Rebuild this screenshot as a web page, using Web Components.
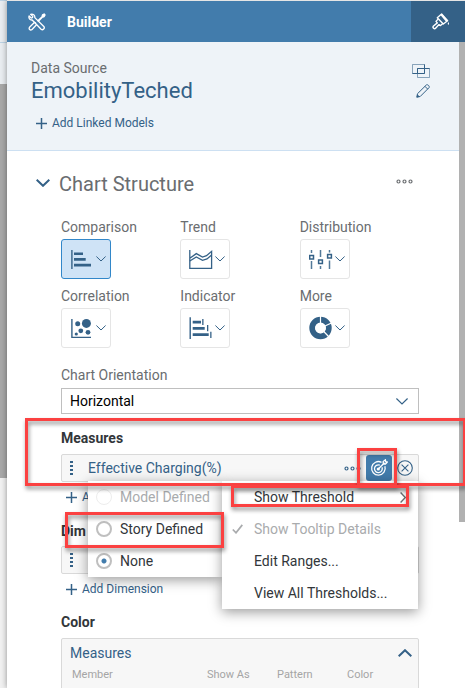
<!DOCTYPE html>
<html lang="en">
<head>
<meta charset="utf-8">
<title>Builder</title>
<style>
html, body { margin: 0; height: 100%; overflow: hidden; }
body { font-family: Roboto, "Liberation Sans", sans-serif; font-size: 14px; color: #333; background: #fff; }
</style>
</head>
<body>
<builder-app></builder-app>
<script>
const ICONS = {
  tools: ['0 0 18 18', '<g fill="none" stroke="currentColor" stroke-width="1.3" stroke-linejoin="round" stroke-linecap="round"><path d="M2.6 1.3 4.8 3.4 4.5 4.7 3.2 5 1.1 2.9C.4 5 1.7 7.2 4.2 7l8.900 9.200c1.700 1.500 4.200-.900 2.700-2.700L6.800 4.600C7.200 2 4.900.5 2.600 1.300Z"/><path d="M9.900 7.700 14.100 3.600 14.500 1.900 16.200 1 17 1.900 16.100 3.600 14.500 4 10.600 8.100M7.600 10 6.600 9.300 1.500 14.300C.4 16 2.200 17.700 3.800 16.700L8.500 11.700"/></g><path d="M13.700 2.800 15.900.7 17.300 2 15.200 4.400Z" fill="currentColor"/>'],
  brush: ['0 0 18 17', '<g fill="none" stroke="currentColor" stroke-width="1.400" stroke-linejoin="round" stroke-linecap="round"><path d="M5.300 4.700 9.600 1 15.600 7.800 11.300 11Z"/><path d="M5.600 6.600 4 8.400 5.300 9.900 1.500 13C.1 14.600 2.300 16.600 3.800 15L7 11.600 8.500 12.600 10.300 11"/></g><path d="M8.600 2.300 10 .9 15.900 7.500 14.300 8.900Z" fill="currentColor"/><path d="M16.400 9C14.200 12.600 18.600 12.600 16.400 9Z" fill="currentColor"/>'],
  linked: ['0 0 18 14', '<g fill="none" stroke="#346187"><path d="M.5.5H12.500V9.500H.5ZM5.500 4.500H17.500V13.500H5.500Z" opacity=".55"/><path d="M5.500 9.500V4.500H12.500V9.500ZM12.500.5V4.500M.5 9.500H5.500M12.500 4.500H17.500"/></g>'],
  pencil: ['0 0 14 14', '<g fill="none" stroke="currentColor" stroke-linejoin="round"><path d="M.8 13.200 1.500 9.700 10.300 1C11.500-.1 14.100 2.300 13 3.700L4.200 12.500Z"/><path d="M8.900 2.300 11.700 5.100"/></g><path d="M.6 13.400 1.300 10.300 3.800 12.700Z" fill="currentColor"/>'],
  plus: ['0 0 11 11', '<path d="M5.500 0V11M0 5.500H11" fill="none" stroke="currentColor" stroke-width="1.500"/>'],
  down: ['0 0 14 8', '<path d="M.7.8 7 6.800 13.300.8" fill="none" stroke="currentColor" stroke-width="2"/>'],
  up: ['0 0 14 8', '<path d="M.7 7.200 7 1.200 13.300 7.200" fill="none" stroke="currentColor" stroke-width="2"/>'],
  thin: ['0 0 10 6', '<path d="M.4.500 5 5 9.600.5" fill="none" stroke="currentColor"/>'],
  thinwide: ['0 0 12 7', '<path d="M.4.500 6 6 11.600.5" fill="none" stroke="currentColor" stroke-width="1.200"/>'],
  right: ['0 0 6 11', '<path d="M.6.6 5.300 5.500.6 10.400" fill="none" stroke="#6a6d70" stroke-width="1.400"/>'],
  more: ['0 0 17 5', '<g fill="none" stroke="currentColor" stroke-width="1.200"><circle cx="2.500" cy="2.500" r="1.500"/><circle cx="8.500" cy="2.500" r="1.500"/><circle cx="14.500" cy="2.500" r="1.500"/></g>'],
  grip: ['0 0 3 14', '<path d="M0 0h3v2H0ZM0 4h3v2H0ZM0 8h3v2H0ZM0 12h3v2H0Z" fill="currentColor"/>'],
  check: ['0 0 11 10', '<path d="M.8 5.500 4 8.800 10.300.9" fill="none" stroke="currentColor" stroke-width="1.700"/>'],
  close: ['0 0 16 16', '<g fill="none" stroke="currentColor" stroke-width="1.100"><circle cx="8" cy="8" r="7.300"/><path d="M4.600 4.600 11.400 11.400M11.400 4.600 4.600 11.400"/></g>'],
  target: ['0 0 18 18', '<g fill="none" stroke="currentColor" stroke-width="1.300"><path d="M11.500 3.300A6.800 6.800 0 1 0 14.900 7.300M9.800 6.100A3.900 3.900 0 1 0 12 8.300"/><path d="M8.300 10 14.500 3.800M13.200 4.800V2.600L15.400.8 15.700 2.600 17.300 3 15.500 5Z"/></g><circle cx="8.300" cy="10" r="1.600" fill="currentColor"/>'],
  comparison: ['0 0 22 22', '<path d="M1.200 2h1.400v19H1.200ZM4 4.400h9v2.600H4ZM4 10h11.700v2.700H4ZM4 15.700h17v2.700H4Z" fill="currentColor"/>'],
  trend: ['0 0 24 22', '<g fill="none" stroke="currentColor" stroke-width="1.300"><path d="M.8 2V20.400H22.600V3.300L17.500 7.700 13.500 9 7.300 5.600.8 10.300"/><path d="M.8 13 7.300 9 13.500 12.300 18 10.900 22.600 7"/></g>'],
  distribution: ['0 0 24 22', '<g fill="none" stroke="currentColor" stroke-width="1.500"><path d="M2.500 2V5M2.500 13V21M11.500 2V9M11.500 18V21M20.500 2V4.500M20.500 12.500V21" opacity=".85"/><path d="M.7 7.500h3.800v3.500H.7ZM9.600 12h3.800v3.500H9.600ZM18.600 6.500h3.800v3.500h-3.800Z"/></g>'],
  correlation: ['0 0 22 22', '<g fill="currentColor"><path d="M1.200 2h1.400v17.800H21V21H1.200Z"/><circle cx="7.700" cy="6.800" r="2.500"/><circle cx="16.400" cy="6.400" r="4.500"/><circle cx="10.800" cy="13.800" r="2.400"/><circle cx="6.300" cy="17" r="1.600"/><circle cx="18" cy="15.300" r="2.400"/></g>'],
  indicator: ['0 0 24 24', '<g fill="currentColor"><path d="M.5 1.300H1.900V23H.5ZM3.700 4.700h8.300v2.700H3.700ZM3.700 11h12v2.700h-12ZM3.700 17.200h16v2.700h-16ZM13.200 3h1.300v6h-1.300ZM18 9h1.300v6.300H18ZM21.200 15.700h1.300v6.300h-1.300Z"/></g>'],
  donut: ['0 0 24 24', '<circle cx="11.500" cy="12" r="8.300" fill="none" stroke="currentColor" stroke-width="5.800"/><path d="M11.500 12V0M11.500 12 22.500 7M11.500 12 20 21" stroke="#fff" stroke-width="1.200"/><circle cx="11.500" cy="12" r="5.300" fill="#fff"/>']
};
const define = (name, html, after) => {
  const t = document.createElement('template');
  t.innerHTML = html;
  customElements.define(name, class extends HTMLElement {
    constructor() { super(); this.attachShadow({ mode: 'open' }); }
    connectedCallback() {
      if (this.shadowRoot.firstChild) return;
      this.shadowRoot.append(t.content.cloneNode(true));
      if (after) after(this, this.shadowRoot);
    }
  });
};
const BTN = 'button{font:inherit;color:inherit;background:none;border:0;padding:0;margin:0;text-align:left;cursor:pointer}';

define('ui-icon', '<style>:host{display:block;flex:none}svg{display:block;width:100%;height:auto}</style><svg aria-hidden="true"></svg>', (el, r) => {
  const [box, art] = ICONS[el.getAttribute('name')];
  const svg = r.querySelector('svg');
  svg.setAttribute('viewBox', box);
  svg.innerHTML = art;
  el.style.width = box.split(' ')[2] + 'px';
});

define('canvas-edge', `<style>
:host{display:flex;flex-direction:column;background:#f1f1f1}
.bar{height:41px;background:#e9edf1;border-top:1px solid #bcd2e4}
.sheet{height:394px;background:#a8a8a8}
</style><div class="bar"></div><div class="bar"></div><div class="sheet"></div>`);

define('panel-header', `<style>${BTN}
:host{display:flex;height:41px;background:#427cac;color:#fff;font-weight:700}
.title{flex:1;display:flex;align-items:center;gap:21px;padding-left:21px}
button{width:54px;background:#346187;display:grid;place-items:center;padding-left:6px}
</style><div class="title"><ui-icon name="tools"></ui-icon><slot></slot></div><button aria-label="Styling"><ui-icon name="brush"></ui-icon></button>`);

define('add-button', `<style>${BTN}
:host{display:flex;color:#346187;font-size:12px;line-height:16px}
button{display:flex;align-items:center;gap:5px}
</style><button><ui-icon name="plus"></ui-icon><span><slot></slot></span></button>`);

define('data-source', `<style>${BTN}
:host{display:flex;justify-content:space-between;height:92px;padding:16px 29px 0 24px;background:#eef3f8;border-bottom:1px solid #cde0f2;color:#346187}
.label{color:#6a6d70;line-height:20px}
.name{font-size:22px;line-height:26px;font-weight:400;margin:0}
add-button{margin:11px 0 0 5px}
.tools{display:flex;flex-direction:column;gap:6px;padding-top:6px}
.tools button{display:grid;justify-items:end}
</style><div><div class="label">Data Source</div><h1 class="name"><slot></slot></h1><add-button>Add Linked Models</add-button></div>
<div class="tools"><button aria-label="Blend data"><ui-icon name="linked"></ui-icon></button><button aria-label="Edit"><ui-icon name="pencil"></ui-icon></button></div>`);

define('section-title', `<style>${BTN}
:host{display:flex;align-items:center;height:26px;padding:20px 46px 0 29px;color:#6a6d70;font-size:20px}
h2{flex:1;font:inherit;margin:0 0 0 9px}
.toggle{color:#346187;padding-bottom:3px}
.more{padding-bottom:6px}
</style><button class="toggle" aria-label="Collapse"><ui-icon name="down"></ui-icon></button><h2><slot></slot></h2><button class="more" aria-label="More"><ui-icon name="more"></ui-icon></button>`);

define('chart-type', `<style>${BTN}
:host{display:block;color:#6a6d70}
label{display:block;line-height:20px;margin-bottom:2px}
button{box-sizing:border-box;width:50px;height:40px;border:1px solid #e5e5e5;border-radius:3px;display:flex;align-items:center;justify-content:space-between;padding:0 4px 0 8px;color:#346187}
:host([selected]) button{background:#cfe3f6;border-color:#3287c9}
</style><label for="b"><slot></slot></label><button id="b"></button>`, (el, r) => {
  r.querySelector('button').innerHTML = `<ui-icon name="${el.getAttribute('icon')}"></ui-icon><ui-icon name="thin"></ui-icon>`;
});

define('field-select', `<style>
:host{display:block}
label{display:block;color:#6a6d70;line-height:20px;margin-bottom:3px}
.box{display:grid;align-items:center}
.box>*{grid-area:1/1}
select{appearance:none;box-sizing:border-box;width:100%;height:26px;border:1px solid #bfbfbf;border-radius:0;background:#fff;color:#000;font:inherit;padding:0 8px}
ui-icon{justify-self:end;margin-right:11px;color:#346187;pointer-events:none}
</style><label for="s"><slot></slot></label><div class="box"><select id="s"><option>Horizontal</option><option>Vertical</option></select><ui-icon name="thinwide"></ui-icon></div>`);

define('field-heading', `<style>:host{display:block;font-weight:700;line-height:20px;color:#32363a}</style><slot></slot>`);

define('field-row', `<style>${BTN}
:host{box-sizing:border-box;display:flex;align-items:center;height:28px;border:1px solid #d9d9d9;border-radius:2px;background:#f7f7f7;color:#346187;padding:0 5px 0 8px}
.name{flex:1;margin-left:15px}
.actions{display:flex;align-items:center;gap:5px}
.target{width:26px;height:26px;border-radius:3px;background:#427cac;color:#fff;display:grid;place-items:center}
:host([plain]) .actions{display:none}
</style><ui-icon name="grip"></ui-icon><span class="name"><slot></slot></span><div class="actions"><button aria-label="More"><ui-icon name="more"></ui-icon></button><button class="target" aria-label="Thresholds"><ui-icon name="target"></ui-icon></button><button aria-label="Remove"><ui-icon name="close"></ui-icon></button></div>`);

define('threshold-options', `<style>
:host{display:block;background:#fff;box-shadow:0 3px 12px rgba(0,0,0,.4);color:#32363a}
label{display:flex;align-items:center;gap:8px;height:32px;padding-left:8px}
input{appearance:none;box-sizing:border-box;width:16px;height:16px;margin:0;border:2px solid #bfbfbf;border-radius:50%;background:#fff}
input:checked{background:radial-gradient(circle,#427cac 2px,#fff 3px)}
.off{color:#a9abad}
.off input{border:1px solid #ededed}
</style><label class="off"><input type="radio" name="t" disabled>Model Defined</label><label><input type="radio" name="t">Story Defined</label><label><input type="radio" name="t" checked>None</label>`);

define('threshold-menu', `<style>${BTN}
:host{display:block;background:#fff;box-shadow:0 3px 12px rgba(0,0,0,.4);color:#32363a}
button{display:flex;align-items:center;width:100%;height:32px;padding:0 12px 0 10px}
.mark{width:22px;flex:none}
.text{flex:1}
.off{color:#a9abad}
</style><button><span class="mark"></span><span class="text">Show Threshold</span><ui-icon name="right"></ui-icon></button><button class="off" disabled><span class="mark"><ui-icon name="check"></ui-icon></span><span class="text">Show Tooltip Details</span></button><button><span class="mark"></span><span class="text">Edit Ranges...</span></button><button><span class="mark"></span><span class="text">View All Thresholds...</span></button>`);

define('call-out', `<style>:host{display:block;box-sizing:border-box;border:3px solid #fb4141;filter:drop-shadow(1px 3px 2px rgba(0,0,0,.45));pointer-events:none}</style>`);

define('color-card', `<style>${BTN}
:host{display:block;height:80px;border:1px solid #d9d9d9;border-radius:2px;background:#f7f7f7}
.head{display:flex;align-items:center;justify-content:space-between;width:100%;height:27px;padding:0 6px 0 8px;color:#346187}
table{width:100%;border-collapse:collapse;table-layout:fixed;font-size:11px;line-height:18px;color:#a5a5a5}
th{font-weight:400;text-align:left;padding:0}
th:first-child{padding-left:10px;width:135px}
th:nth-child(2),th:nth-child(3){width:70px}
</style><button class="head"><span>Measures</span><ui-icon name="up"></ui-icon></button><table><thead><tr><th>Member</th><th>Show As</th><th>Pattern</th><th>Color</th></tr></thead></table>`);

define('builder-app', `<style>
:host{display:grid;grid-template-columns:7px minmax(0,1fr);height:100vh;overflow:hidden}
.panel{display:flex;flex-direction:column;min-height:0;border-top:1px solid #e5e5e5;background:#fff;box-shadow:0 0 6px rgba(0,0,0,.4)}
.body{flex:1;min-height:0;display:grid;grid-template-columns:minmax(0,1fr) 6px}
.thumb{height:480px;background:#b1b1b1}
.content{min-width:0}
.form{padding:20px 40px 0 54px}
.types{display:grid;grid-template-columns:repeat(3,1fr);row-gap:7px}
field-select{margin:17px 0 14px}
.measure{position:relative;z-index:1;margin-top:6px}
add-button{margin:7px 0 0 5px}
field-heading.next{margin-top:16px}
field-row.dim{margin-top:5px}
field-heading.color{margin-top:15px}
color-card{margin-top:6px}
threshold-options,threshold-menu,call-out{position:absolute}
threshold-options{left:27px;width:134px;top:27px}
threshold-menu{right:1px;width:196px;top:27px}
.c1{left:-36px;right:-47px;top:-36px;height:68px}
.c2{right:22px;width:40px;top:-6px;height:38px}
.c3{right:10px;width:178px;top:31px;height:22px}
.c4{left:4px;width:159px;top:58px;height:36px}
</style>
<canvas-edge></canvas-edge>
<div class="panel">
<panel-header>Builder</panel-header>
<div class="body"><div class="content">
<data-source>EmobilityTeched</data-source>
<section-title>Chart Structure</section-title>
<div class="form">
<div class="types">
<chart-type icon="comparison" selected>Comparison</chart-type><chart-type icon="trend">Trend</chart-type><chart-type icon="distribution">Distribution</chart-type>
<chart-type icon="correlation">Correlation</chart-type><chart-type icon="indicator">Indicator</chart-type><chart-type icon="donut">More</chart-type>
</div>
<field-select>Chart Orientation</field-select>
<field-heading>Measures</field-heading>
<div class="measure"><field-row>Effective Charging(%)</field-row>
<threshold-options></threshold-options><threshold-menu></threshold-menu>
<call-out class="c1"></call-out><call-out class="c2"></call-out><call-out class="c3"></call-out><call-out class="c4"></call-out></div>
<add-button>Add</add-button>
<field-heading class="next">Dim</field-heading>
<field-row plain class="dim"></field-row>
<add-button>Add Dimension</add-button>
<field-heading class="color">Color</field-heading>
<color-card></color-card>
</div></div>
<div class="thumb"></div></div>
</div>`);
</script>
</body>
</html>
